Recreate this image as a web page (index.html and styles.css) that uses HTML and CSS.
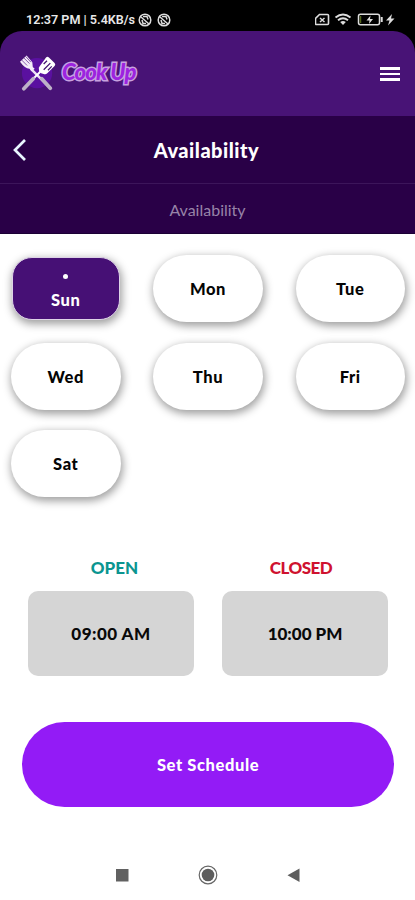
FILE: index.html
```html
<!DOCTYPE html>
<html lang="en">
<head>
<meta charset="utf-8">
<meta name="viewport" content="width=device-width, initial-scale=1">
<title>Availability</title>
<link rel="stylesheet" href="styles.css">
</head>
<body>
<div class="top">
<div class="status">
  <span class="clock">12:37 PM | 5.4KB/s</span>
  <svg class="blocked" viewBox="0 0 14 14"><circle cx="7" cy="7" r="5.8"/><path d="M3 4l8 7M5 3.5h4l1 3M4 7l1 3.5h3"/></svg>
  <svg class="blocked second" viewBox="0 0 14 14"><circle cx="7" cy="7" r="5.8"/><path d="M3 4l8 7M5 3.5h4l1 3M4 7l1 3.5h3"/></svg>
  <svg class="signals" viewBox="0 0 80 14" fill="none" stroke="#ddd">
    <path d="M4.500 1.500h8q1 0 1 1v8q0 1-1 1h-11q-1 0-1-1V5.500z" stroke-width="1.600"/>
    <path d="M5 5l4.500 4M9.500 5L5 9" stroke-width="1.500"/>
    <path d="M20.500 4.500q7.500-6 15 0M23 7.200q5-4 10 0" stroke-width="1.900"/>
    <path d="M25.200 9q2.800-2 5.600 0L28 12z" fill="#ddd" stroke="none"/>
    <rect x="43.500" y="1.300" width="21" height="10.400" rx="2" stroke-width="1.500"/>
    <path d="M66.700 4v5" stroke-width="2"/>
    <path d="M45.500 3v7" stroke="#53651c" stroke-width="1.500"/>
    <path d="M55.500 2.500l-4 5h3l-.5 3.500 4-5h-3zM77 1l-6 6.500h3.500L73 12.500l6.500-7H76z" fill="#ddd" stroke="none"/>
  </svg>
</div>
<header class="brand-bar">
  <svg class="logo" viewBox="0 0 38 38">
    <circle cx="18" cy="18" r="16" fill="#5a10a0"/>
    <path d="M11.500 13.500L33 35" stroke="#eee2f5" stroke-width="2.500"/>
    <path d="M24 14L12 26" stroke="#fff" stroke-width="2.200"/>
    <path d="M14 24L4 34.500M23 24l9 10" stroke="#bdb1c7" stroke-width="4" stroke-linecap="round"/>
    <path d="M0 6L7-.5l6 7 .5 5 2 2-3 2.500-2.500-2.500Q5 13 0 6z" fill="#f3ebf8"/>
    <path d="M1.500 4l6 6M4 2l6 6M6 .5l5.500 6" stroke="#643094" stroke-width=".8"/>
    <path d="M27.500 1.500q1.500-1.500 3 0l6 6q1.500 1.500 0 3l-8 8q-1.500 1.300-3.500.5l-2.700-.8-2-2-.3-2q-.7-2 .8-3.500z" fill="#fff"/>
    <path d="M28.500 5l-3.500 3.500M32 7.500L25 14.500M33.500 11l-4 4" stroke="#401070" stroke-width="1.300"/>
  </svg>
  <span class="wordmark">Cook Up</span>
  <span class="menu"><i></i><i></i><i></i></span>
</header>
</div>
<div class="title-bar">
  <svg class="back" viewBox="0 0 16 24"><path d="M13 2L3 12l10 10"/></svg>
  <h1>Availability</h1>
</div>
<div class="sub-bar">Availability</div>
<main>
  <div class="days">
    <button class="day active"><span class="dot"></span>Sun</button>
    <button class="day">Mon</button>
    <button class="day">Tue</button>
    <button class="day">Wed</button>
    <button class="day">Thu</button>
    <button class="day">Fri</button>
    <button class="day">Sat</button>
  </div>
  <div class="hours">
    <section><h2 class="open">OPEN</h2><div class="time">09:00 AM</div></section>
    <section><h2 class="closed">CLOSED</h2><div class="time pm">10:00 PM</div></section>
  </div>
  <button class="submit">Set Schedule</button>
</main>
<nav>
  <svg viewBox="0 0 20 20"><path d="M4 4h12.500v12.500H4z" fill="#616161"/></svg>
  <svg viewBox="0 0 20 20"><circle cx="10" cy="10" r="8.800" fill="none" stroke="#666" stroke-width="1.200"/><circle cx="10" cy="10" r="6.300" fill="#5c5c5c"/></svg>
  <svg viewBox="0 0 20 20"><path d="M15.500 3.500v13.500L3.500 10.200z" fill="#5e5e5e"/></svg>
</nav>
</body>
</html>
```
FILE: styles.css
```css
* { box-sizing: border-box; }
body {
  margin: 0;
  width: 415px;
  height: 900px;
  overflow: hidden;
  display: flex;
  flex-direction: column;
  background: #fff;
  font-family: Lato, "Liberation Sans", sans-serif;
}
button { border: 0; padding: 0; font: inherit; color: inherit; }
h1, h2 { margin: 0; }

.top { background: #000; }
.status {
  height: 31px;
  padding: 8px 0 0 26px;
  display: flex;
  align-items: center;
  color: #e8e8e8;
}
.clock {
  width: 112px;
  white-space: nowrap;
  font: 600 12.600px/16px Roboto, sans-serif;
}
.blocked { width: 14px; height: 14px; fill: none; stroke: #ddd; stroke-width: 1.500; }
.second { margin-left: 5px; }
.signals { width: 80px; height: 14px; margin-left: 144px; }

.brand-bar {
  height: 85px;
  padding: 0 15px 0 20px;
  display: flex;
  align-items: center;
  background: #481376;
  border-radius: 22px 22px 0 0;
}
.logo { width: 36px; height: 36px; overflow: visible; }
.wordmark {
  margin: -3px 0 0 6px;
  font: italic 900 22px/30px Lato, sans-serif;
  letter-spacing: -.8px;
  color: #9d23df;
  -webkit-text-stroke: 3px #c7a2df;
  paint-order: stroke fill;
}
.menu { width: 20px; margin: 1px 0 0 auto; display: grid; gap: 3px; }
.menu i { height: 2.700px; background: #fff; }

.title-bar {
  height: 69px;
  padding-left: 12px;
  display: grid;
  grid-template-columns: 16px 1fr 30px;
  align-items: center;
  background: #290047;
  border-bottom: 1px solid #3c155a;
  color: #fff;
}
.back { width: 16px; height: 24px; fill: none; stroke: #e8f5ff; stroke-width: 2.700; }
h1 { text-align: center; font-size: 20px; font-weight: 900; line-height: 24px; letter-spacing: .5px; }
.sub-bar {
  height: 50px;
  background: #290047;
  border-bottom: 1px solid #1b0035;
  color: #9783a8;
  text-align: center;
  font-size: 16px;
  line-height: 51px;
}

main { height: 616px; flex: none; }
.days {
  padding: 21px 10px 0 11px;
  display: grid;
  grid-template-columns: repeat(3, 109.500px);
  grid-auto-rows: 67px;
  gap: 20.500px 0;
  justify-content: space-between;
}
.day {
  border-radius: 34px;
  background: #fff;
  box-shadow: 1px 3px 9px 1px rgba(0, 0, 0, .38);
  font-size: 16.500px;
  font-weight: 900;
  letter-spacing: .6px;
  color: #050505;
}
.active {
  margin: 2px 1px;
  padding-top: 6px;
  display: flex;
  flex-direction: column;
  align-items: center;
  justify-content: center;
  gap: 11px;
  line-height: 20px;
  color: #fff;
  background: #461075;
  border: 1px solid #ded3e7;
  border-radius: 20px;
}
.dot { width: 5px; height: 5px; border-radius: 50%; background: #fff; }

.hours {
  margin: 58px 27px 0 28px;
  display: grid;
  grid-template-columns: 166px 166px;
  justify-content: space-between;
}
h2 { height: 36px; text-align: center; font-size: 17px; line-height: 26px; font-weight: 900; padding-left: 7px; }
.closed { padding: 0 8px 0 0; letter-spacing: -.5px; }
.open { color: #0b9590; }
.closed { color: #cf122f; }
.time {
  height: 85px;
  border-radius: 10px;
  background: #d5d5d5;
  color: #090909;
  text-align: center;
  font-size: 17px;
  letter-spacing: .5px;
  line-height: 86px;
  font-weight: 900;
}
.pm { letter-spacing: 0; }
.submit {
  width: 372px;
  height: 85px;
  margin: 46px 0 0 22px;
  border-radius: 43px;
  background: #931bf6;
  color: #fff;
  font-size: 16.500px;
  font-weight: 900;
  letter-spacing: .6px;
}
.day, .submit { padding-top: 1px; }
.day.active { padding-top: 7px; }

nav {
  height: 50px;
  display: flex;
  justify-content: center;
  align-items: center;
  gap: 66px;
}
nav svg { width: 20px; height: 20px; }
```
